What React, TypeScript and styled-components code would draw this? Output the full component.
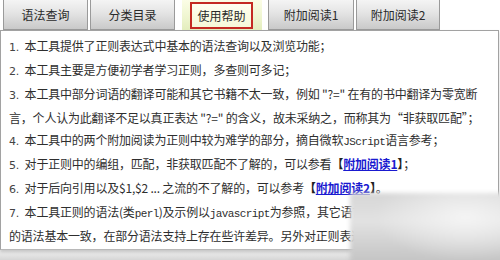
import React from "react";
import styled, { createGlobalStyle } from "styled-components";

const GlobalStyle = createGlobalStyle`
  body {
    margin: 0;
    background: #fff;
    font-family: "Noto Sans CJK SC", "Liberation Sans", sans-serif;
  }
`;

const Page = styled.div`
  position: relative;
  width: 500px;
  height: 260px;
  overflow: hidden;
  background: linear-gradient(to bottom, #fff 0%, #fff 94%, #d6d6d6 100%);
`;

const TabBar = styled.div`
  display: flex;
  align-items: flex-end;
  height: 30px;
  padding-left: 3px;
`;

const Tab = styled.div<{ $w: number; $gap?: number }>`
  box-sizing: border-box;
  width: ${({ $w }) => $w}px;
  height: 30px;
  margin-left: ${({ $gap }) => $gap ?? 2}px;
  display: flex;
  align-items: center;
  justify-content: center;
  border: 1px solid #9a9a9a;
  border-top: none;
  background: linear-gradient(to bottom, #f4f4f4 0%, #e4e4e4 45%, #c9c9c9 100%);
  font-size: 12px;
  color: #2a2a2a;
  &:first-child {
    margin-left: 0;
  }
`;

const ActiveTab = styled.div<{ $w: number; $gap: number }>`
  box-sizing: border-box;
  width: ${({ $w }) => $w}px;
  height: 30px;
  margin-left: ${({ $gap }) => $gap}px;
  padding: 2px 9px 1px 8px;
  background: linear-gradient(to bottom, #fbfde6 0%, #eef5cf 60%, #e3edbd 100%);
  display: flex;
`;

const RedBox = styled.div`
  flex: 1;
  display: flex;
  align-items: center;
  justify-content: center;
  border: 2px solid #c42a22;
  background: linear-gradient(to bottom, #fffff0 0%, #f6f8d8 100%);
  font-size: 12px;
  color: #2a2a2a;
`;

const Panel = styled.div`
  box-sizing: border-box;
  width: 499px;
  height: 220px;
  border: 1px solid #a2a2a2;
  border-bottom-color: #b8b8b8;
  padding: 4px 8px 0 8px;
  background: #fff;
  box-shadow: 0 2px 3px rgba(0, 0, 0, 0.18);
`;

const Line = styled.p`
  margin: 0;
  font-size: 12px;
  line-height: 22px;
  color: #2e2e2e;
  white-space: nowrap;
  letter-spacing: -0.2px;
`;

const Num = styled.span`
  font-family: "DejaVu Sans", "Liberation Sans", sans-serif;
  font-size: 11px;
  color: #444;
  margin-right: 3px;
`;

const Mono = styled.span`
  font-family: "Liberation Mono", monospace;
  font-size: 11px;
  letter-spacing: -0.6px;
`;

const Bracket = styled.span`
  font-weight: bold;
  color: #222;
`;

const Link = styled.a`
  font-weight: bold;
  color: #1a1ad0;
  text-decoration: underline;
`;

const Blur = styled.div`
  position: absolute;
  left: 350px;
  top: 193px;
  width: 160px;
  height: 80px;
  background:
    radial-gradient(ellipse at 72% 30%, rgba(246, 246, 246, 0.9), rgba(246, 246, 246, 0) 55%),
    linear-gradient(to bottom, #d6d6d6 0%, #e2e2e2 35%, #cdcdcd 70%, #bdbdbd 100%);
  filter: blur(2px);
`;

const items: React.ReactNode[] = [
  "本工具提供了正则表达式中基本的语法查询以及浏览功能；",
  "本工具主要是方便初学者学习正则，多查则可多记；",
  "本工具中部分词语的翻译可能和其它书籍不太一致，例如 \"?=\" 在有的书中翻译为零宽断",
];

export default function App() {
  return (
    <>
      <GlobalStyle />
      <Page>
        <TabBar>
          <Tab $w={85}>语法查询</Tab>
          <Tab $w={85}>分类目录</Tab>
          <ActiveTab $w={80} $gap={7}>
            <RedBox>使用帮助</RedBox>
          </ActiveTab>
          <Tab $w={86} $gap={6}>附加阅读1</Tab>
          <Tab $w={84}>附加阅读2</Tab>
        </TabBar>
        <Panel>
          {items.map((t, i) => (
            <Line key={i}>
              <Num>{i + 1}.</Num> {t}
            </Line>
          ))}
          <Line>言，个人认为此翻译不足以真正表达 "?=" 的含义，故未采纳之，而称其为“非获取匹配”；</Line>
          <Line>
            <Num>4.</Num> 本工具中的两个附加阅读为正则中较为难学的部分，摘自微软<Mono>JScript</Mono>语言参考；
          </Line>
          <Line>
            <Num>5.</Num> 对于正则中的编组，匹配，非获取匹配不了解的，可以参看
            <Bracket>【</Bracket>
            <Link>附加阅读1</Link>
            <Bracket>】</Bracket>；
          </Line>
          <Line>
            <Num>6.</Num> 对于后向引用以及$1,$2 ... 之流的不了解的，可以参考
            <Bracket>【</Bracket>
            <Link>附加阅读2</Link>
            <Bracket>】</Bracket>。
          </Line>
          <Line>
            <Num>7.</Num> 本工具正则的语法(类<Mono>perl</Mono>)及示例以<Mono>javascript</Mono>为参照，其它语言
          </Line>
          <Line>的语法基本一致，在部分语法支持上存在些许差异。另外对正则表达式</Line>
        </Panel>
        <Blur />
      </Page>
    </>
  );
}
